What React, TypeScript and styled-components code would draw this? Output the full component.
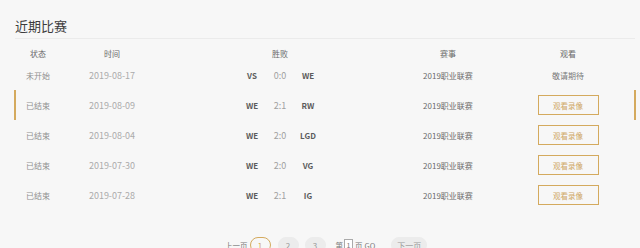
import styled, { createGlobalStyle } from 'styled-components';

const GlobalStyle = createGlobalStyle`
  html, body {
    margin: 0;
    padding: 0;
    background: #f7f7f7;
    overflow: hidden;
  }
  body {
    font-family: "Noto Sans CJK SC", "Noto Sans", sans-serif;
  }
`;

const gold = '#d4aa5e';

const matches = [
  { status: '未开始', date: '2019-08-17', home: 'VS', score: '0:0', away: 'WE', replay: false },
  { status: '已结束', date: '2019-08-09', home: 'WE', score: '2:1', away: 'RW', replay: true, active: true },
  { status: '已结束', date: '2019-08-04', home: 'WE', score: '2:0', away: 'LGD', replay: true },
  { status: '已结束', date: '2019-07-30', home: 'WE', score: '2:0', away: 'VG', replay: true },
  { status: '已结束', date: '2019-07-28', home: 'WE', score: '2:1', away: 'IG', replay: true },
];

const Styled = {
  Page: styled.div`
    width: 640px;
    height: 248px;
    overflow: hidden;
  `,

  Title: styled.h2`
    margin: 0 5px 0 15px;
    padding-top: 16px;
    height: 22px;
    line-height: 20px;
    font-size: 13px;
    font-weight: 400;
    color: #3c3c3c;
    border-bottom: 1px solid #ebebeb;
  `,

  Table: styled.div`
    margin: 0 3px 0 15px;
    width: 622px;
  `,

  HeadRow: styled.div`
    display: grid;
    grid-template-columns: 46px 102px 234px 102px 138px;
    align-items: end;
    height: 21px;
    font-size: 8px;
    line-height: 12px;
    color: #6a6a6a;
    text-align: center;
  `,

  Row: styled.div<{ $active?: boolean }>`
    position: relative;
    display: grid;
    grid-template-columns: 46px 102px 234px 102px 138px;
    align-items: center;
    height: 30px;
    text-align: center;

    &::before,
    &::after {
      content: '';
      display: ${({ $active }) => ($active ? 'block' : 'none')};
      position: absolute;
      top: 0;
      bottom: 0;
      width: 2px;
      background: ${gold};
    }
    &::before {
      left: -1px;
    }
    &::after {
      right: 1px;
    }
  `,

  Status: styled.div`
    font-size: 8px;
    color: #8f8f8f;
  `,

  Date: styled.div`
    font-size: 9px;
    color: #ababab;
  `,

  Score: styled.div`
    display: flex;
    justify-content: center;
    align-items: center;
  `,

  Team: styled.span`
    width: 24px;
    font-size: 8px;
    font-weight: 700;
    color: #5c5c5c;
  `,

  Points: styled.span`
    width: 32px;
    font-size: 9px;
    color: #a0a0a0;
  `,

  Event: styled.div`
    font-size: 8px;
    color: #6a6a6a;
  `,

  Watch: styled.div`
    display: flex;
    justify-content: center;
    font-size: 8px;
    color: #7a7a7a;
  `,

  ReplayButton: styled.button`
    width: 61px;
    height: 20px;
    padding: 0;
    border: 1px solid ${gold};
    background: transparent;
    color: #cfa866;
    font-family: inherit;
    font-size: 7.5px;
  `,

  Pager: styled.div`
    display: flex;
    align-items: center;
    margin: 26px 0 0 225px;
    height: 18px;
    font-size: 8px;
    color: #777;
  `,

  PagerText: styled.span<{ $gap?: number }>`
    margin-right: ${({ $gap }) => $gap ?? 0}px;
    font-size: 7.5px;
  `,

  PageItem: styled.span<{ $current?: boolean; $w?: number; $gap?: number }>`
    display: inline-flex;
    align-items: center;
    justify-content: center;
    box-sizing: border-box;
    width: ${({ $w }) => $w ?? 21}px;
    height: 16px;
    margin-right: ${({ $gap }) => $gap ?? 0}px;
    border-radius: 8px;
    border: 1px solid ${({ $current }) => ($current ? gold : '#ececec')};
    background: ${({ $current }) => ($current ? 'transparent' : '#ececec')};
    color: ${({ $current }) => ($current ? gold : '#999')};
  `,

  PageInput: styled.span`
    display: inline-flex;
    align-items: center;
    justify-content: center;
    box-sizing: border-box;
    width: 9px;
    height: 12px;
    margin: 0 2px 0 1px;
    border: 1px solid #aaa;
    background: #fff;
    font-size: 7px;
    color: #777;
  `,
};

export default function App() {
  return (
    <Styled.Page>
      <GlobalStyle />
      <Styled.Title>近期比赛</Styled.Title>
      <Styled.Table>
        <Styled.HeadRow>
          <span>状态</span>
          <span>时间</span>
          <span>胜败</span>
          <span>赛事</span>
          <span>观看</span>
        </Styled.HeadRow>
        {matches.map((m) => (
          <Styled.Row key={m.date} $active={m.active}>
            <Styled.Status>{m.status}</Styled.Status>
            <Styled.Date>{m.date}</Styled.Date>
            <Styled.Score>
              <Styled.Team>{m.home}</Styled.Team>
              <Styled.Points>{m.score}</Styled.Points>
              <Styled.Team>{m.away}</Styled.Team>
            </Styled.Score>
            <Styled.Event>2019职业联赛</Styled.Event>
            <Styled.Watch>
              {m.replay ? <Styled.ReplayButton>观看录像</Styled.ReplayButton> : '敬请期待'}
            </Styled.Watch>
          </Styled.Row>
        ))}
      </Styled.Table>
      <Styled.Pager>
        <Styled.PagerText $gap={2}>上一页</Styled.PagerText>
        <Styled.PageItem $current $gap={7}>1</Styled.PageItem>
        <Styled.PageItem $gap={6}>2</Styled.PageItem>
        <Styled.PageItem $gap={10}>3</Styled.PageItem>
        <Styled.PagerText>第</Styled.PagerText>
        <Styled.PageInput>1</Styled.PageInput>
        <Styled.PagerText $gap={2}>页</Styled.PagerText>
        <Styled.PagerText $gap={16}>GO</Styled.PagerText>
        <Styled.PageItem $w={36}>下一页</Styled.PageItem>
      </Styled.Pager>
    </Styled.Page>
  );
}
